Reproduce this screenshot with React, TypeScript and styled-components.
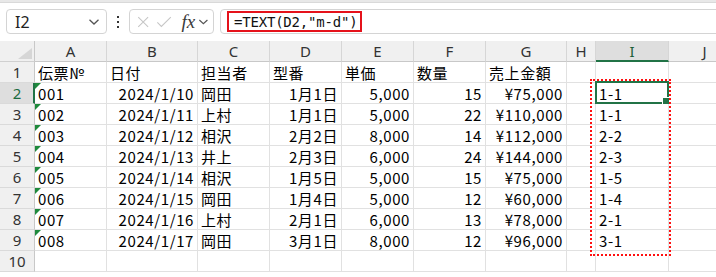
import React from "react";
import styled, { createGlobalStyle } from "styled-components";

const GlobalStyle = createGlobalStyle`
  html, body { margin: 0; padding: 0; background: #ffffff; overflow: hidden; }
  * { box-sizing: border-box; }
`;

const CELL_FONT = `"Noto Sans CJK JP", "Noto Sans", sans-serif`;
const UI_FONT = `"Noto Sans", "Liberation Sans", sans-serif`;
const GREEN = "#217346";

const Page = styled.div`
  width: 716px;
  height: 277px;
  overflow: hidden;
  position: relative;
  background: #ffffff;
`;

const FormulaBar = styled.div`
  height: 41px;
  display: flex;
  align-items: flex-start;
  padding-top: 9px;
  background: linear-gradient(#e8e8e8 0 2px, #d9d9d9 2px 3px, #ffffff 3px);
`;

const Box = styled.div`
  height: 25px;
  border: 1px solid #d4d4d4;
  border-radius: 4px;
  background: #ffffff;
  display: flex;
  align-items: center;
`;

const NameBox = styled(Box)`
  margin-left: 6px;
  width: 101px;
  padding: 0 6px 0 8px;
  justify-content: space-between;
  font-family: ${UI_FONT};
  font-size: 16px;
  color: #222;
`;

const Dots = styled.div`
  width: 22px;
  height: 25px;
  display: flex;
  align-items: center;
  justify-content: center;
`;

const FnBox = styled(Box)`
  width: 85px;
  padding: 0 4px 0 6px;
`;

const FxText = styled.span`
  font-family: "Liberation Serif", "DejaVu Serif", serif;
  font-style: italic;
  font-size: 19px;
  color: #3a3a3a;
  margin-left: 9px;
  margin-right: 3px;
  line-height: 1;
`;

const FormulaInput = styled(Box)`
  flex: 1;
  margin-left: 6px;
  margin-right: -10px;
  padding-left: 6px;
`;

const Formula = styled.div`
  height: 21px;
  border: 2px solid #e5121b;
  padding: 0 3px 0 5px;
  display: flex;
  align-items: center;
  font-family: "DejaVu Sans Mono", "Liberation Mono", monospace;
  font-size: 14px;
  color: #111;
  letter-spacing: -0.2px;
`;

const Sheet = styled.div`
  position: relative;
  display: grid;
  grid-template-columns: 35px 72px 91px 72px 72px 72px 72px 81px 29px 73px 72px;
  grid-auto-rows: 21px;
`;

const Corner = styled.div`
  background: #f0f0f0;
  border-right: 1px solid #c8c8c8;
  border-bottom: 1px solid #d0d0d0;
  position: relative;
  &::after {
    content: "";
    position: absolute;
    right: 2px;
    bottom: 2px;
    width: 0;
    height: 0;
    border-left: 14px solid transparent;
    border-bottom: 11px solid #d6d6d6;
  }
`;

const ColHead = styled.div<{ $active?: boolean }>`
  background: ${(p) => (p.$active ? "#dedede" : "#f0f0f0")};
  border-right: 1px solid #d6d6d6;
  border-bottom: ${(p) => (p.$active ? `2px solid ${GREEN}` : "1px solid #c8c8c8")};
  display: flex;
  align-items: center;
  justify-content: center;
  font-family: ${UI_FONT};
  font-size: 15px;
  color: ${(p) => (p.$active ? "#1b5e38" : "#333")};
  padding-top: ${(p) => (p.$active ? "1px" : "0")};
`;

const RowHead = styled.div<{ $active?: boolean }>`
  background: ${(p) => (p.$active ? "#dedede" : "#f0f0f0")};
  border-right: ${(p) => (p.$active ? `2px solid ${GREEN}` : "1px solid #c8c8c8")};
  border-bottom: 1px solid #dadada;
  display: flex;
  align-items: center;
  justify-content: center;
  font-family: ${UI_FONT};
  font-size: 15px;
  color: ${(p) => (p.$active ? "#1b6a3e" : "#333")};
  padding-left: ${(p) => (p.$active ? "1px" : "0")};
`;

const Cell = styled.div<{ $align?: "left" | "right"; $flag?: boolean }>`
  position: relative;
  border-right: 1px solid #e1e1e1;
  border-bottom: 1px solid #e1e1e1;
  display: flex;
  align-items: center;
  justify-content: ${(p) => (p.$align === "right" ? "flex-end" : "flex-start")};
  padding: 0 3px 0 3px;
  font-family: ${CELL_FONT};
  font-size: 15px;
  letter-spacing: 0.6px;
  color: #000;
  white-space: nowrap;
  &::before {
    content: "";
    display: ${(p) => (p.$flag ? "block" : "none")};
    position: absolute;
    left: 0;
    top: 0;
    width: 0;
    height: 0;
    border-top: 6px solid #1e8a3c;
    border-right: 6px solid transparent;
  }
`;

const Selection = styled.div`
  position: absolute;
  left: -1px;
  top: -2px;
  right: -1px;
  bottom: -1px;
  border: 2px solid ${GREEN};
  pointer-events: none;
  &::after {
    content: "";
    position: absolute;
    right: -3px;
    bottom: -3px;
    width: 6px;
    height: 6px;
    background: ${GREEN};
    border: 1px solid #ffffff;
  }
`;

const Marquee = styled.div`
  position: absolute;
  left: 590px;
  top: 38px;
  width: 81px;
  height: 177px;
  border: 2px dotted #ff1010;
  pointer-events: none;
`;

const Chevron = () => (
  <svg width="12" height="8" viewBox="0 0 12 8">
    <path d="M1.5 1.8 L6 6 L10.5 1.8" fill="none" stroke="#555" strokeWidth="1.3" />
  </svg>
);

const VDots = () => (
  <svg width="4" height="12" viewBox="0 0 4 12">
    <rect x="1" y="0" width="2" height="2" fill="#333" />
    <rect x="1" y="5" width="2" height="2" fill="#333" />
    <rect x="1" y="10" width="2" height="2" fill="#333" />
  </svg>
);

const CrossIcon = () => (
  <svg width="16" height="16" viewBox="0 0 16 16">
    <path d="M2.5 2.5 L13.5 13.5 M13.5 2.5 L2.5 13.5" stroke="#c6c6c6" strokeWidth="1.2" fill="none" />
  </svg>
);

const CheckIcon = () => (
  <svg width="18" height="16" viewBox="0 0 18 16" style={{ marginLeft: 6 }}>
    <path d="M1.5 8.5 L6 13 L16.5 2.5" stroke="#c6c6c6" strokeWidth="1.2" fill="none" />
  </svg>
);

type Row = { cells: string[] };

const columns = ["A", "B", "C", "D", "E", "F", "G", "H", "I", "J"];
const aligns: ("left" | "right")[] = ["left", "right", "left", "right", "right", "right", "right", "left", "left", "left"];

const rows: Row[] = [
  { cells: ["伝票№", "日付", "担当者", "型番", "単価", "数量", "売上金額", "", "", ""] },
  { cells: ["001", "2024/1/10", "岡田", "1月1日", "5,000", "15", "¥75,000", "", "1-1", ""] },
  { cells: ["002", "2024/1/11", "上村", "1月1日", "5,000", "22", "¥110,000", "", "1-1", ""] },
  { cells: ["003", "2024/1/12", "相沢", "2月2日", "8,000", "14", "¥112,000", "", "2-2", ""] },
  { cells: ["004", "2024/1/13", "井上", "2月3日", "6,000", "24", "¥144,000", "", "2-3", ""] },
  { cells: ["005", "2024/1/14", "相沢", "1月5日", "5,000", "15", "¥75,000", "", "1-5", ""] },
  { cells: ["006", "2024/1/15", "岡田", "1月4日", "5,000", "12", "¥60,000", "", "1-4", ""] },
  { cells: ["007", "2024/1/16", "上村", "2月1日", "6,000", "13", "¥78,000", "", "2-1", ""] },
  { cells: ["008", "2024/1/17", "岡田", "3月1日", "8,000", "12", "¥96,000", "", "3-1", ""] },
  { cells: ["", "", "", "", "", "", "", "", "", ""] },
];

export default function App() {
  return (
    <Page>
      <GlobalStyle />
      <FormulaBar>
        <NameBox>
          <span>I2</span>
          <Chevron />
        </NameBox>
        <Dots>
          <VDots />
        </Dots>
        <FnBox>
          <CrossIcon />
          <CheckIcon />
          <FxText>fx</FxText>
          <Chevron />
        </FnBox>
        <FormulaInput>
          <Formula>=TEXT(D2,"m-d")</Formula>
        </FormulaInput>
      </FormulaBar>
      <Sheet>
        <Corner />
        {columns.map((c) => (
          <ColHead key={c} $active={c === "I"}>
            {c}
          </ColHead>
        ))}
        {rows.map((r, ri) => (
          <React.Fragment key={ri}>
            <RowHead $active={ri === 1}>{ri + 1}</RowHead>
            {r.cells.map((v, ci) => (
              <Cell
                key={ci}
                $align={ri === 0 ? "left" : aligns[ci]}
                $flag={ci === 0 && ri >= 1 && ri <= 8}
              >
                {v}
                {ri === 1 && ci === 8 && <Selection />}
              </Cell>
            ))}
          </React.Fragment>
        ))}
        <Marquee />
      </Sheet>
    </Page>
  );
}
